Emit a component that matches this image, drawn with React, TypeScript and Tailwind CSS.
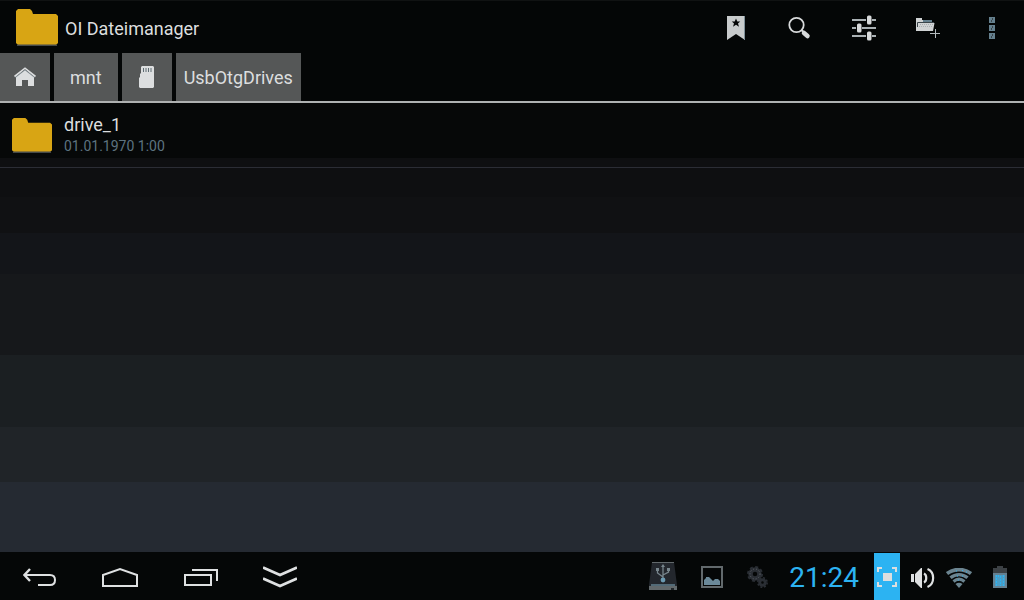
import React from 'react';

interface ActionProps {
  label: string;
  className: string;
  children: React.ReactNode;
}

const Action: React.FC<ActionProps> = ({ label, className, children }) => (
  <button type="button" aria-label={label} className={`flex items-center justify-center ${className}`}>
    {children}
  </button>
);

const BigFolder: React.FC<{ className: string }> = ({ className }) => (
  <svg className={className} viewBox="0 0 42 38" preserveAspectRatio="none" fill="#d8a514" aria-hidden="true">
    <path d="M0 3 2 1H14L16 3 17 6H40L42 8V35L40 37H2L0 35Z" />
    <path d="M1 36.5H41V38H1Z" fill="#44494a" />
  </svg>
);

const BookmarkIcon = () => (
  <svg className="w-[18px] h-6" viewBox="0 0 18 24" aria-hidden="true">
    <path d="M0 0H18V24L9 18 0 24Z" fill="#c8cbcc" />
    <path d="M17 0h1v24h-1z" fill="#7f9099" />
    <path d="M9 2.5 10.3 5.6H13.2L11 7.5 12 10.7 9 8.7 6 10.7 7 7.5 4.8 5.6H7.7Z" fill="#050707" />
  </svg>
);

const SearchIcon = () => (
  <svg className="w-6 h-6" viewBox="0 0 24 24" fill="none" stroke="#d8dadb" aria-hidden="true">
    <circle cx="8.5" cy="9" r="7.2" strokeWidth="1.8" />
    <path d="m13.5 14 2 2" strokeWidth="2" />
    <path d="m16 17 3.5 3" strokeWidth="4.5" strokeLinecap="round" />
  </svg>
);

const SlidersIcon = () => (
  <svg className="w-[26px] h-[26px]" viewBox="0 -1 26 26" fill="#d8dadb" aria-hidden="true">
    <path d="M1 3h14v2H1zM21 3h4v2h-4zM1 11h4v2H1zM11 11h14v2H11zM1 19h14v2H1zM21 19h4v2h-4z" fill="#aab1b4" />
    <rect x="16" y="-0.5" width="4.5" height="9" rx="1.5" />
    <rect x="6" y="7.5" width="4.5" height="9" rx="1.5" />
    <rect x="16" y="15.5" width="4.5" height="9" rx="1.5" />
  </svg>
);

const NewFolderIcon = () => (
  <svg className="w-6 h-5" viewBox="0 0 24 20" aria-hidden="true">
    <path d="M0 0H6V2H16V5H18.5L17 13H0Z" fill="#d0d3d4" />
    <path d="M7 2H16V4H7z" fill="#65808e" />
    <path d="M1.5 9V4.5H18" fill="none" stroke="#3c464b" />
    <path d="M4 6.5H17M3 8.5H17" fill="none" stroke="#a9afb2" strokeDasharray="1 1" />
    <path d="M19.5 11V20M14 15.5H24" stroke="#b4babd" fill="none" />
  </svg>
);

const OverflowIcon = () => (
  <svg className="w-1.5 h-[22px]" viewBox="0 0 6 22" aria-hidden="true">
    <path d="M0 0h6v6H0zM0 8h6v6H0zM0 16h6v6H0z" fill="#65808e" />
    <path d="M3.5 1v2M2.5 3v2M3.5 9v2M2.5 11v2M3.5 17v2M2.5 19v2" stroke="#3b464c" fill="none" />
  </svg>
);

const HouseIcon = () => (
  <svg className="w-[22px] h-5" viewBox="0 0 22 20" aria-hidden="true">
    <path d="M2 10 11 3 20 10V19H14V13H8V19H2Z" fill="#dcdedf" />
    <path d="M0.5 9.5 11 1.2 21.5 9.5" fill="none" stroke="#dcdedf" strokeWidth="1.6" />
    <path d="M1.5 10.5 11 3 20.5 10.5" fill="none" stroke="#7f9099" strokeWidth="0.6" />
  </svg>
);

const SdCardIcon = () => (
  <svg className="w-4 h-[22px]" viewBox="0 0 16 22" aria-hidden="true">
    <path d="M3 0H14L15 1V21L14 22H1L0 21V12L1 11V8L2 7V1Z" fill="#dcdedf" />
    <path d="M4.5 2v4M7 2v4M9.5 2v4M12 2v4" stroke="#5e6c73" />
  </svg>
);

const BackIcon = () => (
  <svg className="w-[34px] h-[18px]" viewBox="0 0 34 18" fill="none" stroke="#dfe1e2" strokeWidth="2" aria-hidden="true">
    <path d="M2 7H27C31 7 32 9 32 12 32 15 31 17 27 17H15" />
    <path d="M7 1 1.5 7 7 13" strokeWidth="2.4" />
  </svg>
);

const HomeIcon = () => (
  <svg className="w-9 h-5" viewBox="0 0 36 20" fill="none" stroke="#dfe1e2" strokeWidth="2" aria-hidden="true">
    <path d="M1 19V8L18 2 35 8V19Z" />
  </svg>
);

const RecentIcon = () => (
  <svg className="w-9 h-[18px]" viewBox="-2 0 36 18" fill="none" stroke="#dfe1e2" strokeWidth="2" aria-hidden="true">
    <path d="M1 7H27V17H1Z" />
    <path d="M8 2H33V13" />
  </svg>
);

const HideIcon = () => (
  <svg className="w-[34px] h-[22px]" viewBox="0 0 34 22" fill="none" stroke="#dfe1e2" strokeWidth="2.8" aria-hidden="true">
    <path d="M0 1.5 17 9 34 1.5M0 12.5 17 20 34 12.5" />
  </svg>
);

const UsbDriveIcon = () => (
  <svg className="w-7 h-[29px]" viewBox="0 0 28 29" aria-hidden="true">
    <path d="M3 0H25L28 23V28H0V23Z" fill="#23272d" />
    <path d="M3 0H25V1H3zM0 24H28V28H0Z" fill="#62696c" />
    <path d="M2 22H26V24H2z" fill="#526a77" />
    <path d="M14 4V17M8.5 8V11L14 15M19.5 7V10L14 13" fill="none" stroke="#78868d" strokeWidth="1.3" />
    <path d="M12 5 14 2 16 5ZM7 6h3v3H7zM18 6h3v3h-3z" fill="#78868d" />
    <circle cx="14" cy="18" r="2.4" fill="#6b9ab2" />
    <path d="M22 26h3v2h-3z" fill="#22272b" />
  </svg>
);

const PictureIcon = () => (
  <svg className="w-[22px] h-[22px]" viewBox="0 0 22 22" aria-hidden="true">
    <path d="M1 1H21V21H1Z" fill="none" stroke="#62696c" strokeWidth="2" />
    <path d="M3 19V14L5 12V11H8L10 13 12 15 14 13H17L19 15V19Z" fill="#6b8999" />
  </svg>
);

const GearsIcon = () => (
  <svg className="w-[22px] h-[22px]" viewBox="0 0 22 22" fill="none" stroke="#2a2e34" aria-hidden="true">
    <circle cx="8" cy="8" r="4.5" strokeWidth="4.5" />
    <circle cx="8" cy="8" r="7" strokeWidth="2" strokeDasharray="3 2.5" />
    <circle cx="15.5" cy="16.5" r="2.8" strokeWidth="3" />
    <circle cx="15.5" cy="16.5" r="4.7" strokeWidth="1.5" strokeDasharray="2 1.69" />
    <circle cx="8" cy="8" r="5" stroke="#5e6367" strokeDasharray="1 2" />
  </svg>
);

const ScreenshotIcon = () => (
  <svg className="w-5 h-5" viewBox="0 0 20 20" aria-hidden="true">
    <path d="M1 5V1H5M15 1H19V5M19 15V19H15M5 19H1V15" fill="none" stroke="#dcdedf" strokeWidth="2" />
    <path d="M6 6h9v8H6z" fill="#dcdedf" />
  </svg>
);

const VolumeIcon = () => (
  <svg className="w-6 h-5" viewBox="0 0 24 20" aria-hidden="true">
    <path d="M0 6h3v8H0zM4 6 10 0H11V20H10L4 14Z" fill="#dfe1e2" />
    <path d="M13 5.5C16 7 16 13 13 14.5M16.5 1C24 4 24 16 16.5 19" fill="none" stroke="#dfe1e2" strokeWidth="2.2" />
  </svg>
);

const WifiIcon = () => (
  <svg className="w-[26px] h-5" viewBox="0 0 26 20" fill="none" stroke="#6b8490" aria-hidden="true">
    <path d="M1 5.5C8 0.3 18 0.3 25 5.5" strokeWidth="3.8" />
    <path d="M4.5 9.8C9.5 5.5 16.5 5.5 21.5 9.8" strokeWidth="3.4" />
    <path d="M7.5 13.5C11 10.5 15 10.5 18.5 13.5" strokeWidth="3" />
    <path d="M9.5 16Q13 13.5 16.5 16L13 20Z" fill="#6b8490" stroke="none" />
    <path d="M10 3h1M16 2.5h1M20 4h1M11 8h1M16 8h1M12 12h1" stroke="#31b0ea" />
  </svg>
);

const BatteryIcon = () => (
  <svg className="w-3.5 h-[22px]" viewBox="0 0 14 22" aria-hidden="true">
    <path d="M4 0h6v2h4v5H0V2h4z" fill="#3c4145" />
    <path d="M0 7h14v15H0z" fill="#648091" />
    <path d="M2 9h10v11H2z" fill="#4a9dc6" />
    <path d="M3.5 9v11M5.5 9v2M7.5 10v10M10.5 9v11" stroke="#2cb3f2" strokeDasharray="2 1" />
  </svg>
);

export default function App() {
  return (
    <div className="flex min-h-screen flex-col bg-[#040606] font-[Roboto,sans-serif] text-[#dcdedf]">
      <header className="flex h-[53px] items-center justify-between border-t border-[#101212] pl-4">
        <div className="flex items-center gap-[7px]">
          <BigFolder className="w-[42px] h-[38px]" />
          <h1 className="pt-1 text-lg leading-6">OI Dateimanager</h1>
        </div>
        <nav aria-label="Aktionen" className="flex h-full pt-0.5">
          <Action label="Lesezeichen" className="w-16"><BookmarkIcon /></Action>
          <Action label="Suchen" className="w-16"><SearchIcon /></Action>
          <Action label="Einstellungen" className="w-16"><SlidersIcon /></Action>
          <Action label="Neuer Ordner" className="w-16"><NewFolderIcon /></Action>
          <Action label="Mehr" className="w-16"><OverflowIcon /></Action>
        </nav>
      </header>

      <nav aria-label="Pfad" className="flex h-[50px] gap-1 border-b-2 border-[#aeb1b1] text-lg">
        <Action label="Start" className="w-[50px] bg-[#555757]"><HouseIcon /></Action>
        <button type="button" className="bg-[#555757] px-4 pt-0.5">mnt</button>
        <Action label="SD-Karte" className="w-[50px] bg-[#555757]"><SdCardIcon /></Action>
        <button type="button" className="bg-[#555757] px-2 pt-0.5">UsbOtgDrives</button>
      </nav>

      <main className="flex-1 bg-[linear-gradient(#060808_0_12.3%,#0e0f11_12.3%_21%,#101113_21%_29%,#131519_29%_38%,#16181b_38%_56.2%,#1b1f22_56.2%_72.2%,#202428_72.2%_84.4%,#252a32_84.4%)]">
        <ul>
          <li className="border-b border-[#2b2d35]">
            <button type="button" className="flex h-16 w-full items-center gap-3 px-3 text-left">
              <BigFolder className="w-10 h-9" />
              <span className="flex flex-col pb-0.5">
                <span className="text-lg leading-6">drive_1</span>
                <span className="text-sm leading-[18px] text-[#5d7380]">01.01.1970 1:00</span>
              </span>
            </button>
          </li>
        </ul>
      </main>

      <footer className="flex h-12 items-center justify-between bg-[#050707] pt-px">
        <nav aria-label="System" className="flex h-full pt-px">
          <Action label="Zurück" className="w-20"><BackIcon /></Action>
          <Action label="Startseite" className="w-20"><HomeIcon /></Action>
          <Action label="Letzte Apps" className="w-20"><RecentIcon /></Action>
          <Action label="Ausblenden" className="w-20"><HideIcon /></Action>
        </nav>
        <div className="flex h-full items-center pr-[17px]">
          <div className="flex items-center gap-6">
            <UsbDriveIcon />
            <PictureIcon />
            <GearsIcon />
          </div>
          <time className="pt-0.5 pr-[15px] pl-5 text-[28px] leading-8 text-[#2cb3f2]">21:24</time>
          <Action label="Bildschirmfoto" className="h-full w-[26px] bg-[#2cb3f2]"><ScreenshotIcon /></Action>
          <div className="flex items-center gap-[11px] pt-0.5 pl-[11px]">
            <VolumeIcon />
            <WifiIcon />
          </div>
          <div className="pl-[21px]"><BatteryIcon /></div>
        </div>
      </footer>
    </div>
  );
}
